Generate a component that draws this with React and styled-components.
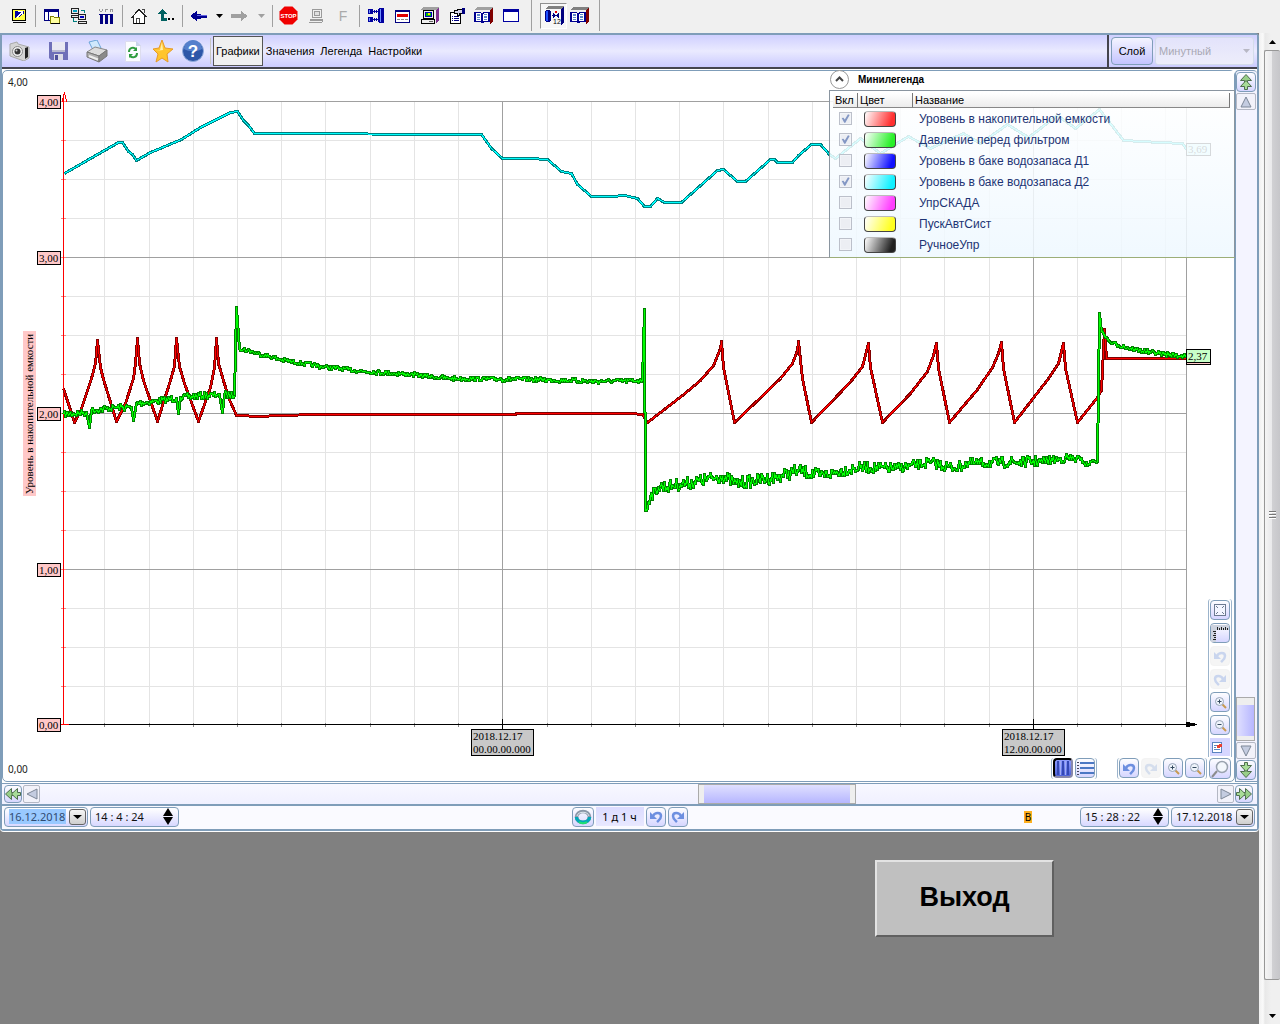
import styled, { createGlobalStyle } from "styled-components";

const GlobalStyle = createGlobalStyle`
    * { box-sizing: border-box; }
    body {
        margin: 0;
        background: #f0f0f0;
        font-family: "Liberation Sans", Arial, sans-serif;
        font-size: 12px;
        color: #000;
    }
    button, input, select {
        font: inherit;
        color: inherit;
        margin: 0;
        padding: 0;
    }
    svg { display: block; flex: none; }
`

/* ---------- window frame ---------- */

const Page = styled.div`
    display: flex;
    flex-direction: column;
    min-height: 100vh;
`
const Body = styled.div`
    display: flex;
    flex: 1;
`
const Workspace = styled.main`
    display: flex;
    flex-direction: column;
    flex: 1;
    min-width: 0;
    background: #808080;
`
const Panel = styled.section`
    background: #fff;
    border: 2px solid #7f9db9;
    border-radius: 0 4px 4px 4px;
    box-shadow: 0 1px 0 #fff;
`
const ExitButton = styled.button`
    align-self: flex-end;
    width: 179px;
    height: 77px;
    margin: 29px 205px 29px 0;
    padding-bottom: 2px;
    background: #c0c0c0;
    border: 2px solid;
    border-color: #e3e3e3 #606060 #606060 #e3e3e3;
    font-size: 27px;
    font-weight: 700;
`
const PageScroll = styled.div`
    display: flex;
    flex-direction: column;
    align-items: center;
    width: 21px;
    padding-left: 5px;
    background: linear-gradient(90deg, #f0f0f0 0, #fafafa 4px, #e8e8e8 6px, #f0f0f0 12px);
`
const PageScrollArrow = styled.button`
    display: flex;
    align-items: center;
    justify-content: center;
    width: 16px;
    height: 17px;
    border: 0;
    background: none;
`
const PageThumb = styled.div`
    display: flex;
    flex: 1;
    flex-direction: column;
    align-items: center;
    justify-content: center;
    gap: 1px;
    width: 16px;
    margin-bottom: 27px;
    border: 1px solid #979797;
    border-right: 0;
    border-radius: 2px;
    background: linear-gradient(90deg, #f5f5f5, #e9e9eb 45%, #d0d0d3 50%, #c6c6ca);
`
const Grip = styled.span`
    width: 7px;
    height: 2px;
    border-bottom: 1px solid #fff;
    background: #777;
`

/* ---------- top toolbar ---------- */

const TopBar = styled.header`
    display: flex;
    align-items: center;
    height: 33px;
    padding: 0 0 2px 5px;
`
const TopButton = styled.button`
    display: flex;
    align-items: center;
    justify-content: center;
    width: ${(p) => p.$width || 27}px;
    height: 26px;
    border: 1px solid;
    border-color: ${(p) => (p.$pressed ? "#909090 #fff #fff #909090" : "transparent")};
    background: ${(p) => (p.$pressed ? "#f7f7f7" : "none")};
`
const TopSeparator = styled.span`
    width: 1px;
    height: ${(p) => (p.$tall ? 31 : 22)}px;
    margin: ${(p) => (p.$tall ? "0 8px 0 7px" : "0 2px 0 3px")};
    background: #a0a0a0;
`

/* ---------- ribbon with the view tabs ---------- */

const Ribbon = styled.nav`
    display: flex;
    align-items: center;
    height: 34px;
    border-bottom: 2px solid #44444e;
    background: linear-gradient(#cfcfff, #eaeaff 50%, #cbcbff);
`
const RibbonIcon = styled.button`
    display: flex;
    align-items: center;
    justify-content: center;
    width: ${(p) => p.$width}px;
    height: 30px;
    border: 0;
    background: none;
`
const RibbonTab = styled.button`
    height: 30px;
    padding: 0 2px;
    border: 1px solid ${(p) => (p.$active ? "#555" : "transparent")};
    background: ${(p) => (p.$active ? "#f0f0f0" : "none")};
    font-size: 11px;
`
const RibbonLine = styled.span`
    width: 1px;
    height: 26px;
    margin-right: 2px;
    background: #c8c8c0;
`
const LayerBox = styled.div`
    display: flex;
    align-items: center;
    gap: 2px;
    margin-left: auto;
    height: 32px;
    padding: 0 3px 0 2px;
    border-left: 2px solid #44444e;
`
const LayerButton = styled.button`
    width: 42px;
    height: 28px;
    border: 1px solid #7f9db9;
    border-radius: 4px;
    background: linear-gradient(#f4f4ff, #c4c4ff);
    font-size: 11px;
`
const LayerSelect = styled.select`
    appearance: none;
    width: 99px;
    height: 28px;
    padding-left: 3px;
    border: 1px solid #d4dcea;
    border-radius: 3px;
    background: linear-gradient(#e3e3fb, #ededfa);
    color: #a9a9b4;
    font-size: 11px;
    opacity: 1;
`
const SelectWrap = styled.label`
    display: grid;
    align-items: center;
    > * { grid-area: 1 / 1; }
    > svg { justify-self: end; margin-right: 4px; }
`

/* ---------- chart ---------- */

const ChartRow = styled.div`
    display: flex;
    margin-top: 1px;
`
const ChartArea = styled.div`
    position: relative;
    flex: 1;
    min-width: 0;
    border: 1px solid #7f9db9;
    border-radius: 5px;
    background: #fff;
`
const ChartSvg = styled.svg`
    width: 100%;
    height: auto;
`
const SideTools = styled.div`
    position: absolute;
    right: 2px;
    bottom: 1px;
    display: flex;
    flex-direction: column;
    align-items: flex-end;
`
const ToolColumn = styled.div`
    display: flex;
    flex-direction: column;
    gap: 3px;
    padding: 1px;
    border: 1px solid #9bb3cb;
    border-width: 0 1px;
    border-radius: 3px 3px 0 0;
`
const ToolRow = styled.div`
    display: flex;
    gap: 2px;
    padding: 1px;
`
const ToolGroup = styled.div`
    display: flex;
    gap: 2px;
    padding: 0 1px;
    margin-right: ${(p) => p.$after || 0}px;
    border: 1px solid #9bb3cb;
    border-width: 0 1px;
    border-radius: 3px;
`
const ToolButton = styled.button`
    display: flex;
    align-items: center;
    justify-content: center;
    width: ${(p) => p.$width || 20}px;
    height: ${(p) => p.$height || 20}px;
    border: 1px solid ${(p) => (p.disabled ? "#f3f3f3" : "#7f9db9")};
    border-radius: 4px;
    background: ${(p) => (p.disabled ? "#f5f5f5" : "linear-gradient(#fdfdff, #d6d6ff)")};
    ${(p) => p.$pressed && "border: 2px solid #000; border-right-color: #88a; border-bottom-color: #88a; background: linear-gradient(#8f9dff, #4d62d8);"}
    ${(p) => p.$flat && "border: 0; border-radius: 0; background: #d6d6ff;"}
    ${(p) => p.$plain && "border-color: #b4b8c4; border-radius: 2px; background: #f2f2fa;"}
`

/* ---------- minilegend ---------- */

const Legend = styled.aside`
    position: absolute;
    top: 0;
    right: -1px;
    width: 406px;
`
const LegendHeader = styled.div`
    display: flex;
    align-items: center;
    gap: 9px;
    height: 19px;
    padding: 0 0 2px 1px;
    margin-right: 1px;
    background: #fff;
    font-size: 10px;
    font-weight: 700;
`
const CollapseButton = styled.button`
    display: flex;
    align-items: center;
    justify-content: center;
    width: 19px;
    height: 19px;
    border: 1px solid #999;
    border-radius: 50%;
    background: #fff;
`
const LegendBody = styled.div`
    height: 168px;
    padding: 2px 4px 0 3px;
    border: 1px solid #8a95a0;
    border-bottom-color: #9cae78;
    background: linear-gradient(rgba(255, 255, 255, 0.86), rgba(238, 248, 255, 0.86));
`
const LegendTable = styled.table`
    width: 100%;
    border-collapse: separate;
    border-spacing: 0;
    table-layout: fixed;
    th {
        height: 15px;
        padding: 0 0 0 2px;
        border-right: 1px solid #777;
        border-bottom: 1px solid #888;
        background: linear-gradient(#fff, #ececec);
        text-align: left;
        font-size: 11px;
        font-weight: 400;
        line-height: 14px;
    }
    td {
        height: 21px;
        padding: 0 0 0 6px;
        color: #1d3474;
        line-height: 14px;
    }
`
const Check = styled.input`
    appearance: none;
    display: grid;
    place-content: center;
    width: 13px;
    height: 13px;
    border: 1px solid #bcc0ca;
    outline: 1px solid #f2f4f8;
    outline-offset: -2px;
    background: #eceef3;
    &:checked::before {
        content: "";
        width: 9px;
        height: 9px;
        background: #8397c4;
        clip-path: polygon(8% 45%, 28% 42%, 42% 62%, 78% 4%, 96% 10%, 48% 98%, 36% 98%);
    }
`
const Swatch = styled.span`
    display: block;
    width: 32px;
    height: 16px;
    border: 1px solid #444;
    border-top-color: #bbb;
    border-radius: 4px;
    background: linear-gradient(110deg, #fff, ${(p) => p.$color} 85%);
`

/* ---------- chart scroll bars ---------- */

const VScroll = styled.div`
    display: flex;
    flex-direction: column;
    align-items: center;
    gap: 1px;
    width: 22px;
    padding: 1px 2px 1px 0;
    border: 1px solid #7f9db9;
    border-width: 1px 0 1px 1px;
    border-radius: 4px 4px 0 0;
    background: #f4f4ff;
`
const HScroll = styled.div`
    display: flex;
    align-items: center;
    gap: 1px;
    height: 23px;
    margin-top: 1px;
    padding: 0 4px 0 2px;
    border-top: 1px solid #7f9db9;
    border-bottom: 2px solid #7f9db9;
    background: linear-gradient(#f8f8ff, #f0f0ff);
`
const Track = styled.div`
    display: flex;
    flex: 1;
    align-self: stretch;
    flex-direction: ${(p) => (p.$vertical ? "column" : "row")};
`
const Space = styled.span`
    flex: ${(p) => p.$part};
`
const Thumb = styled.div`
    flex: ${(p) => p.$part};
    border: 0 solid #eee;
    border-width: ${(p) => (p.$vertical ? "8px 0 5px" : "0 6px")};
    outline: 1px solid #aaa;
    outline-offset: -1px;
    background: linear-gradient(${(p) => (p.$vertical ? "90deg" : "180deg")}, #e2e2ff, #b4b4ff);
    background-clip: padding-box;
    background-color: #eee;
`

/* ---------- time range footer ---------- */

const Footer = styled.footer`
    display: grid;
    grid-template-columns: 1fr auto 1fr;
    align-items: center;
    height: 23px;
    padding: 0 2px 2px;
    background: #fafaff;
    font-family: "Noto Sans", sans-serif;
    font-size: 12px;
`
const FooterGroup = styled.div`
    display: flex;
    align-items: center;
    justify-content: ${(p) => (p.$end ? "flex-end" : "flex-start")};
    gap: 2px;
`
const FieldBox = styled.div`
    display: flex;
    align-items: center;
    justify-content: space-between;
    width: ${(p) => p.$width}px;
    height: 20px;
    padding: 0 1px 0 4px;
    border: 1px solid #7f9db9;
    border-radius: 4px;
    background: linear-gradient(#fff, #d8d8ff);
`
const Field = styled.input`
    width: ${(p) => p.$width}px;
    height: 15px;
    border: 0;
    outline: 0;
    background: ${(p) => (p.$selected ? "#99c9ff" : "none")};
    color: ${(p) => (p.$selected ? "#2f4a70" : "#111")};
    font-size: 11px;
`
const DropButton = styled.button`
    display: flex;
    align-items: center;
    justify-content: center;
    width: 17px;
    height: 16px;
    border: 1px solid #666;
    border-radius: 3px;
    background: linear-gradient(#f6f6f6, #cfcfcf);
`
const SpinButtons = styled.span`
    display: flex;
    flex-direction: column;
    gap: 1px;
    margin-right: 4px;
`
const SpinButton = styled.button`
    display: block;
    border: 0;
    background: none;
`
const SpanLabel = styled.output`
    width: 48px;
    height: 19px;
    background: linear-gradient(#dcdcff, #e8e8ff);
    font-size: 11px;
    line-height: 20px;
    text-align: center;
`
const Marker = styled.span`
    width: 8px;
    margin-right: 46px;
    background: #ffb020;
    font-size: 10px;
    line-height: 12px;
    text-align: center;
`

/* ---------- icons ---------- */

const Icon = ({ w = 16, h = 16, children }) => (
    <svg width={w} height={h} viewBox={`0 0 ${w} ${h}`} fill="none" shapeRendering="crispEdges" aria-hidden="true">
        {children}
    </svg>
);
const Smooth = ({ w = 16, h = 16, children }) => (
    <svg width={w} height={h} viewBox={`0 0 ${w} ${h}`} fill="none" aria-hidden="true">
        {children}
    </svg>
);

const RuntimeIcon = () => (
    <Icon>
        <path d="M1 1h14v12H1zM2 14h13v1H2z" fill="#000" />
        <path d="M2 2h12v10H2z" fill="#ffff40" />
        <path d="M4 3h9v8H4z" fill="#0000a0" />
        <path d="M3 11l3-3 2 1 2-2 1 1 2-3v6z" fill="#ffff40" />
        <path d="M5 9l5-5h-3V3h5v4h-1V5L6 10z" fill="#fff" />
    </Icon>
);
const WindowFolderIcon = () => (
    <Icon>
        <path d="M.5 1.500h14v11H.5z" fill="#fff" stroke="#000080" />
        <path d="M1 2h13v2H1z" fill="#000080" />
        <path d="M4 4h1v9H4z" fill="#000080" />
        <path d="M6.500 8.500h3l1 1h5v6h-9z" fill="#ffffa0" stroke="#808000" />
        <path d="M7 15h9v1H7z" fill="#000" />
    </Icon>
);
const Pc = ({ x, y, screen = "#0000c0" }) => (
    <g transform={`translate(${x} ${y})`}>
        <path d="M0 0h8v6H0zM0 7h9v3H0z" fill="#222" />
        <path d="M1 1h6v4H1zM1 8h7v1H1z" fill="#e8e8e8" />
        <path d="M2 2h4v2H2z" fill={screen} />
    </g>
);
const NetworkIcon = () => (
    <Icon>
        <path d="M10 2.500h3.500V5M2.500 10v3.500H6" stroke="#008080" />
        <Pc x={0} y={0} screen="#00a0c0" />
        <Pc x={7} y={6} />
    </Icon>
);
const TanksIcon = () => (
    <Icon>
        <path d="M2 6h3v10H2zM7 6h3v10H7zM12 6h3v10h-3z" fill="#000080" />
        <path d="M1 6h14v1H1z" fill="#000080" />
        <path d="M1 1h1v2H1zM4 1h1v2H4zM2 3h2v1H2zM7 1h3v1H7zM7 2h1v2H7zM12 1h3v1h-3zM14 2h1v2h-1zM12 2h1v2h-1z" fill="#999" />
    </Icon>
);
const HomeIcon = () => (
    <Icon>
        <path d="M2.500 15.500v-7l-2 1L8 1.500l7 7h-2v7z" fill="#fff" stroke="#222" />
        <path d="M5.500 15v-5h3v5M11 1h2v4" stroke="#444" />
        <path d="M3 15h11" stroke="#000" />
    </Icon>
);
const UpLevelIcon = () => (
    <Icon>
        <path d="M4 1L0 6h3v7h6v-3H6V6h3z" fill="#006060" />
        <path d="M10 10h2v2h-2zM14 10h2v2h-2z" fill="#000" />
    </Icon>
);
const ArrowIcon = ({ right, color }) => (
    <Icon w={17} h={10}>
        <path
            d={right ? "M17 5l-7-5v3H0v4h10v3z" : "M0 5l7-5v3h4v1h6v3h-6v1H7v2z"}
            fill={color}
        />
        {!right && <path d="M7 4h10v1H7z" fill="#6060e0" />}
    </Icon>
);
const Caret = ({ color = "#000", up, w = 7 }) => (
    <Smooth w={w} h={4}>
        <path d={up ? `M0 4h${w}L${w / 2} 0z` : `M0 0h${w}L${w / 2} 4z`} fill={color} />
    </Smooth>
);
const StopIcon = () => (
    <Smooth w={19} h={19}>
        <path d="M5.500.5h8l5 5v8l-5 5h-8l-5-5v-8z" fill="#f00000" />
        <text x="9.500" y="12" fill="#fff" fontSize="6" fontWeight="700" textAnchor="middle">STOP</text>
    </Smooth>
);
const GrayPcIcon = () => (
    <Icon>
        <path d="M4 1h10v9H4zM2 11h12v2H2zM1 14h13v1H1z" fill="#9a9a9a" />
        <path d="M5 2h8v7H5z" fill="#f0f0f0" />
        <path d="M6 3h6v5H6z" fill="#9a9a9a" />
        <path d="M7 4h4v3H7z" fill="#e0e0e0" />
        <path d="M14 11h1v3h-1z" fill="#9a9a9a" />
    </Icon>
);
const ForceIcon = () => (
    <Smooth>
        <text x="8" y="13" fill="#aaa" fontSize="14" textAnchor="middle">F</text>
    </Smooth>
);
const LinkIcon = () => (
    <Icon>
        <path d="M0 1h5v5H0zM0 9h5v5H0zM11 0h4l1 1v13l-1 1h-4l-1-1V1z" fill="#0000a0" />
        <path d="M1 2h1v3H1zM1 10h1v3H1zM12 1h1v13h-1z" fill="#7090ff" />
        <path d="M5 3h1v1H5zM6 2h1v3H6zM7 3h1v1H7zM8 2h1v3H8zM9 3h1v1H9zM5 11h1v1H5zM6 10h1v3H6zM7 11h1v1H7zM8 10h1v3H8zM9 11h1v1H9z" fill="#0000a0" />
    </Icon>
);
const FormIcon = () => (
    <Icon w={15} h={14}>
        <path d="M.5 1.500h14v12H.5z" fill="#fff" stroke="#000080" />
        <path d="M0 1h15v2H0z" fill="#000080" />
        <path d="M2 5h11v3H2z" fill="#e00000" />
        <path d="M2 10h3v1H2zM6 10h3v1H6zM10 10h3v1h-3z" fill="#888" />
    </Icon>
);
const MonitorIcon = () => (
    <Icon w={19} h={17}>
        <path d="M4 0h15l-3 3H0z" fill="#a0a0a0" />
        <path d="M19 0v13l-3 4V3z" fill="#803090" />
        <path d="M3 3h11v9H3zM1 12h14v5H1z" fill="#000" />
        <path d="M4 4h9v7H4zM2 13h12v3H2z" fill="#eee" />
        <path d="M5 5h7v5H5z" fill="#0000c0" />
        <path d="M6 6h5v3H6z" fill="#00c000" />
        <path d="M8 6h2v2H8z" fill="#ffe000" />
        <path d="M9 14h4v1H9z" fill="#666" />
    </Icon>
);
const PropsIcon = () => (
    <Icon>
        <path d="M1 4h11v12H1z" fill="#000" />
        <path d="M2 5h9v10H2z" fill="#fff" />
        <path d="M3 8h1v1H3zM5 8h5v1H5zM3 10h1v1H3zM5 10h5v1H5zM3 12h1v1H3zM5 12h5v1H5z" fill="#000080" />
        <path d="M5 2h3V1h5v5h-2v2H9v1H8V6H5z" fill="#000" />
        <path d="M6 3h3V2h4v3h-3v2H9V5H6z" fill="#d4d4e8" />
        <path d="M13 0h3v6h-3z" fill="#000080" />
    </Icon>
);
const BookIcon = ({ shade = "#a0a0a0" }) => (
    <Icon w={19} h={17}>
        <path d="M4 0h15l-3 3H0z" fill={shade} />
        <path d="M19 0v14l-3 3V3z" fill="#800000" />
        <path d="M0 5h6l2 1 2-1h6v10h-6l-1 1H7l-1-1H0z" fill="#000090" />
        <path d="M2 6h4l1 1v7H2zM9 7l1-1h4v8H9z" fill="#fff" />
        <path d="M3 7h3v2H3zM3 10h3v1H3zM3 12h3v1H3zM10 7h3v1h-3zM10 9h3v2h-3zM10 12h3v1h-3z" fill="#5a86c8" />
    </Icon>
);
const BlankWindowIcon = () => (
    <Icon w={16} h={13}>
        <path d="M0 0h16v13H0z" fill="#0000a0" />
        <path d="M1 3h14v9H1z" fill="#fff" />
    </Icon>
);
const ScaleIcon = () => (
    <Icon w={20} h={19}>
        <path d="M4 0h16l-3 3H1z" fill="#808080" />
        <path d="M20 0v16l-3 3V3z" fill="#000080" />
        <path d="M1 5l2-1h2l2 1v10l-2 1H3l-2-1z" fill="#000080" />
        <path d="M2 5h2v10H2z" fill="#2050ff" />
        <path d="M8 9h1V7h1v1h1v1h2V8h1V7h1v5h-1v-1h-1v-1h-2v1h-1v1H9v-2H8z" fill="#000080" />
        <path d="M11 5h2v2h-2z" fill="#e00000" />
        <text x="9" y="18" fill="#000" fontSize="7">12</text>
    </Icon>
);

const CameraIcon = () => (
    <Smooth w={22} h={20}>
        <path d="M1 3l7-2 1 2 11 3v11l-5 3L1 15z" fill="#d4d4d4" stroke="#aaa" />
        <path d="M16 7l3-1v10l-3 2z" fill="#222" />
        <circle cx="8.500" cy="10.500" r="5" fill="#f2f2f2" stroke="#888" />
        <circle cx="8.500" cy="10.500" r="3" fill="#333" />
        <circle cx="7.500" cy="9.500" r="1" fill="#ccc" />
    </Smooth>
);
const FloppyIcon = () => (
    <Smooth w={19} h={20}>
        <path d="M0 1h19v18H2l-2-2z" fill="#6f70b8" />
        <path d="M3 1h13v10H3z" fill="#e9e9f2" />
        <path d="M3 9h13v2H3z" fill="#b9bad0" />
        <path d="M5 13h9v6H5z" fill="#dcdce6" />
        <path d="M6 14h3v5H6z" fill="#50519c" />
    </Smooth>
);
const PrinterIcon = () => (
    <Smooth w={22} h={23}>
        <path d="M3 2l8-2 4 8-7 4z" fill="#cfe8fc" stroke="#6aa5d8" />
        <path d="M1 12l8-5 12 3-8 6z" fill="#dcdcdc" stroke="#888" />
        <path d="M1 12l12 4v6L1 17z" fill="#b0b0b0" stroke="#777" />
        <path d="M13 16l8-6v6l-8 6z" fill="#8a8a8a" stroke="#777" />
        <path d="M3 16l9 3.500" stroke="#eee" strokeWidth="2" />
    </Smooth>
);
const RefreshIcon = () => (
    <Smooth w={16} h={21}>
        <path d="M.5.5h11l4 4v16H.5z" fill="#fbfcff" stroke="#dde" />
        <path d="M11 0v5h5z" fill="#c8d4ea" />
        <path d="M4 11c0-5 5-5 7-3M12 12c0 5-5 5-7 3" stroke="#2f9c3f" strokeWidth="2" />
        <path d="M12 6v4H8zM4 17v-4h4z" fill="#2f9c3f" />
    </Smooth>
);
const StarIcon = () => (
    <Smooth w={21} h={23}>
        <path d="M9 0l3 8 8 1-6 5 1 8-6-4-6 4 2-8-5-5 6-1z" fill="#ffc52e" stroke="#e79a28" />
        <path d="M9 2l1 8-7 1 4-1z" fill="#fff0a8" />
    </Smooth>
);
const HelpIcon = () => (
    <Smooth w={22} h={22}>
        <circle cx="11" cy="11" r="10.500" fill="#2d57a8" stroke="#8faadb" />
        <path d="M2 9a9 9 0 0 1 18 0c-5 3-13 3-18 0z" fill="#5580cc" />
        <text x="11" y="17" fill="#fff" fontSize="17" fontWeight="700" textAnchor="middle">?</text>
    </Smooth>
);

const FitIcon = () => (
    <Icon w={12} h={12}>
        <path d="M0 0h12v12H0z" fill="#6c7a90" />
        <path d="M1 1h10v10H1z" fill="#f4f6ff" />
        <path d="M2 2h1v1H2zM3 3h1v1H3zM9 2h1v1H9zM8 3h1v1H8zM2 9h1v1H2zM3 8h1v1H3zM9 9h1v1H9zM8 8h1v1H8z" fill="#6c7a90" />
    </Icon>
);
const RulerIcon = () => (
    <Icon w={18} h={17}>
        <path d="M0 0h18v5H5v12H0z" fill="#cdd2de" />
        <path d="M6 2h1v3H6zM8 3h1v2H8zM10 2h1v3h-1zM12 3h1v2h-1zM14 2h1v3h-1zM16 3h1v2h-1zM2 6h3v1H2zM3 8h2v1H3zM2 10h3v1H2zM3 12h2v1H3zM2 14h3v1H2z" fill="#222" />
    </Icon>
);
const TurnIcon = ({ redo, color = "#6d8fe0" }) => (
    <Smooth w={14} h={13}>
        <g transform={redo ? "translate(14 0) scale(-1 1)" : undefined}>
            <path d="M4 6C6 2 12 2 12 6c0 3-2 4-4 6" stroke={color} strokeWidth="2.500" />
            <path d="M1 2v7h7z" fill={color} />
        </g>
    </Smooth>
);
const ZoomIcon = ({ plus }) => (
    <Smooth w={13} h={13}>
        <path d="M8 8l4 4" stroke="#c89a50" strokeWidth="2" />
        <circle cx="5.500" cy="5.500" r="4" fill="#eef3fb" stroke="#98a5b8" />
        <path d={plus ? "M3.500 5.500h4M5.500 3.500v4" : "M3.500 5.500h4"} stroke="#34495e" />
    </Smooth>
);
const LoupeIcon = () => (
    <Smooth w={18} h={18}>
        <path d="M6 11l-5 6" stroke="#8c8c8c" strokeWidth="2" />
        <circle cx="11" cy="7" r="5.500" fill="#f3f7fc" stroke="#9aa3af" strokeWidth="1.500" />
    </Smooth>
);
const NoteIcon = () => (
    <Icon w={16} h={12}>
        <path d="M0 1h10v11H0z" fill="#5b83c0" />
        <path d="M1 2h8v9H1z" fill="#fff" />
        <path d="M2 4h3v1H2zM2 6h2v1H2zM2 8h6v1H2z" fill="#5b83c0" />
        <path d="M5 4h2V3h3v3H8v1H5z" fill="#e84030" />
    </Icon>
);
const ColumnsIcon = () => (
    <Icon w={16} h={16}>
        <path d="M3 1v14M8 1v14M13 1v14" stroke="#3448b4" strokeWidth="2" />
        <path d="M5.500 1v14M10.500 1v14" stroke="#a0acf4" />
    </Icon>
);
const RowsIcon = () => (
    <Icon w={18} h={16}>
        <path d="M4 3h14M4 8h14M4 13h14" stroke="#4c78c4" strokeWidth="2" />
        <path d="M1 2h2v1H1zM1 5h2v1H1zM1 8h2v1H1zM1 11h2v1H1zM1 14h2v1H1z" fill="#445" />
    </Icon>
);
const RingIcon = () => (
    <Smooth w={18} h={16}>
        <ellipse cx="9" cy="8" rx="6.500" ry="5.500" stroke="#8a97a8" strokeWidth="3.500" />
        <path d="M2.500 8c0 7 13 7 13 0" stroke="#00a8b8" strokeWidth="3.500" />
        <path d="M5 13c3 2 5 2 8 0" stroke="#20e070" strokeWidth="2" />
        <path d="M3 7c1-5 11-5 12 0" stroke="#dfe7ee" />
    </Smooth>
);
const DoubleArrow = ({ turn = 0 }) => (
    <Smooth w={16} h={16}>
        <g transform={`rotate(${turn} 8 8)`}>
            <path d="M9.500 2.500l6 5.500-6 5.500v-4h-3v-3h3z" fill="#98cf88" stroke="#4e6e4e" />
            <path d="M3.500 2.500l6 5.500-6 5.500v-4h-3v-3h3z" fill="#a8dc98" stroke="#4e6e4e" />
        </g>
    </Smooth>
);
const Triangle = ({ turn = 0 }) => (
    <Smooth w={12} h={12}>
        <path d="M1 1l10 5-10 5z" fill="#c4cce0" stroke="#7d8797" transform={`rotate(${turn} 6 6)`} />
    </Smooth>
);
const Spin = ({ down }) => (
    <Smooth w={10} h={8}>
        <path d={down ? "M0 0h10L5 8z" : "M0 8h10L5 0z"} fill="#000" />
    </Smooth>
);

/* ---------- chart data, [x, y] pairs in plot units ---------- */

const LEVEL_TANK_2 = [
    [64, 173], [90, 158], [118, 142], [122, 142], [128, 151], [132, 154], [136, 160], [150, 152], [181, 139], [200, 127], [220, 117],
    [230, 112], [237, 111], [243, 120], [248, 125], [254, 133], [481, 134], [491, 148], [502, 158], [530, 158], [547, 159], [561, 171],
    [571, 173], [577, 184], [591, 196], [612, 196], [624, 195], [637, 198], [644, 206], [650, 206], [657, 198], [664, 202], [681, 202],
    [717, 170], [723, 169], [737, 181], [745, 181], [770, 159], [774, 159], [777, 162], [792, 162], [798, 155], [811, 144], [820, 144],
    [829, 154], [835, 158], [860, 138], [880, 153], [908, 136], [930, 148], [963, 133], [980, 143], [1007, 124], [1028, 137], [1057, 115],
    [1075, 128], [1099, 109], [1123, 140], [1160, 142], [1182, 143], [1187, 150],
];
const LEVEL_STORAGE = [
    [63, 388], [74, 422], [80, 411], [91, 378], [95, 363], [97, 340], [100, 367], [103, 379], [116, 421], [125, 403], [133, 378],
    [135, 363], [137, 338], [139, 363], [143, 380], [157, 421], [170, 380], [174, 366], [176, 338], [179, 366], [184, 383], [198, 421],
    [210, 387], [214, 367], [216, 338], [218, 363], [228, 397], [236, 415], [260, 416], [277, 415], [320, 414], [515, 414], [516, 413],
    [630, 413], [642, 414], [647, 422], [660, 412], [682, 395], [700, 380], [713, 365], [720, 348], [721, 341], [723, 367], [734, 422],
    [753, 404], [780, 378], [792, 363], [797, 350], [798, 341], [802, 378], [811, 422], [840, 392], [852, 379], [862, 366], [868, 343],
    [870, 367], [882, 422], [910, 393], [927, 371], [933, 355], [936, 343], [938, 368], [949, 422], [977, 389], [992, 367], [998, 353],
    [1001, 342], [1003, 368], [1014, 422], [1048, 378], [1058, 363], [1063, 343], [1065, 368], [1077, 422], [1097, 397], [1101, 390],
    [1104, 329], [1106, 358], [1187, 358],
];
// third value is the amplitude of the ripple up to that point
const PRESSURE = [
    [63, 414, 0], [86, 412, 3], [89, 427, 0], [91, 410, 0], [115, 407, 3], [131, 407, 3], [133, 420, 0], [136, 403, 0], [176, 398, 3],
    [178, 413, 0], [180, 397, 0], [219, 394, 3], [222, 412, 0], [224, 394, 0], [234, 395, 3], [236, 307, 0], [239, 348, 0],
    [280, 359, 2], [320, 366, 2], [365, 371, 2], [410, 374, 2], [450, 378, 2], [530, 379, 2], [600, 381, 2],
    [642, 380, 2], [644, 309, 0], [645, 510, 0], [650, 496, 5], [658, 487, 5], [680, 484, 6], [722, 476, 6], [736, 483, 6],
    [775, 477, 6], [798, 470, 6], [820, 475, 6], [860, 467, 5], [895, 468, 5], [930, 462, 5], [954, 468, 5], [966, 463, 5],
    [1000, 462, 5], [1040, 461, 5], [1065, 458, 4], [1080, 459, 4], [1087, 465, 2], [1092, 460, 1], [1097, 461, 1], [1099, 313, 0],
    [1101, 331, 0], [1110, 342, 1], [1130, 348, 2], [1150, 352, 2], [1187, 356, 2],
];

const COLUMNS = Array.from({ length: 25 }, (_, i) => Math.floor(104.9 + 44.21 * i));
const ROWS = Array.from({ length: 17 }, (_, i) => Math.min(101 + 39 * i, 724));
const MAJOR_COLUMNS = [9, 21];
const Y_LABELS = ["4,00", "3,00", "2,00", "1,00", "0,00"];
const X_LABELS = ["00.00.00.000", "12.00.00.000"];

function toLine(points) {
    return points.map((p) => p.join(",")).join(" ");
}

function addRipple(points) {
    let seed = 7;
    const random = () => {
        seed = (seed * 16807) % 2147483647;
        return seed / 2147483647 - 0.5;
    };
    const out = [points[0].slice(0, 2)];
    for (let i = 1; i < points.length; i++) {
        const [x0, y0] = points[i - 1];
        const [x1, y1, amp] = points[i];
        if (amp) {
            for (let x = x0 + 1; x < x1; x += 1) {
                const y = y0 + ((y1 - y0) * (x - x0)) / (x1 - x0);
                out.push([x, Math.round(y + random() * 2 * amp)]);
            }
        }
        out.push([x1, y1]);
    }
    return out;
}

const PRESSURE_LINE = toLine(addRipple(PRESSURE));

function Trace({ points, color, edge }) {
    return (
        <g fill="none" strokeLinejoin="round" transform="translate(0.5 0.5)" shapeRendering="crispEdges">
            <polyline points={points} stroke={edge} strokeWidth="3" />
            <polyline points={points} stroke={color} strokeWidth="1" />
        </g>
    );
}

function Chart() {
    return (
        <ChartSvg viewBox="3 71 1231 710" role="img" aria-label="Графики" fontFamily="Liberation Serif, serif" fontSize="11">
            <g shapeRendering="crispEdges">
                {COLUMNS.map((x, i) => !MAJOR_COLUMNS.includes(i) && <rect key={x} x={x} y="101" width="1" height="623" fill="#e4e4e4" />)}
                {ROWS.map((y, i) => i % 4 !== 0 && <rect key={y} x="64" y={y} width="1123" height="1" fill="#e4e4e4" />)}
                {MAJOR_COLUMNS.map((i) => <rect key={i} x={COLUMNS[i]} y="101" width="1" height="623" fill="#a0a0a0" />)}
                {ROWS.map((y, i) => i % 4 === 0 && <rect key={y} x="64" y={y} width="1123" height="1" fill="#a0a0a0" />)}
                <rect x="1186" y="101" width="1" height="623" fill="#a0a0a0" />
                {COLUMNS.map((x, i) => (
                    <rect key={x} x={x} y={MAJOR_COLUMNS.includes(i) ? 719 : 723} width="1" height={MAJOR_COLUMNS.includes(i) ? 10 : 4} fill={MAJOR_COLUMNS.includes(i) ? "#000" : "#888"} />
                ))}
                <rect x="64" y="724" width="1124" height="1" fill="#000" />
                <path d="M1186 722h4v1h5v1h2v1h-2v1h-5v1h-4z" fill="#000" />
                {ROWS.map((y) => <rect key={y} x="61" y={y} width="5" height="1" fill="#ff8080" />)}
                <rect x="63" y="97" width="1" height="628" fill="#f00" />
                <rect x="61" y="724" width="8" height="1" fill="#f00" />
                <path d="M62 98h1v-4h1v-2h1v3h1v4h1v3h-1v-3h-1v-4h-1v4h-1v3h-1z" fill="#f00" />
            </g>

            <Trace points={toLine(LEVEL_TANK_2)} color="#00ffff" edge="#008080" />
            <Trace points={toLine(LEVEL_STORAGE)} color="#ff0000" edge="#800000" />
            <Trace points={PRESSURE_LINE} color="#00ff00" edge="#008000" />

            {Y_LABELS.map((label, i) => (
                <g key={label}>
                    <rect x="37.500" y={ROWS[i * 4] - 5.5} width="23" height="13" fill="#ffc8c8" stroke="#000" />
                    <text x="39" y={ROWS[i * 4] + 5}>{label}</text>
                </g>
            ))}
            {X_LABELS.map((label, i) => (
                <g key={label} transform={`translate(${COLUMNS[MAJOR_COLUMNS[i]]} 729)`}>
                    <rect x="-30.500" y="0.500" width="62" height="26" fill="#c8c8c8" stroke="#000" />
                    <text x="-29" y="11">2018.12.17</text>
                    <text x="-29" y="24">{label}</text>
                </g>
            ))}

            <rect x="23" y="331" width="13" height="165" fill="#ffc8c8" />
            <text x="-414" y="33" textAnchor="middle" transform="rotate(-90)">Уровень в накопительной емкости</text>

            <rect x="1186.500" y="351.500" width="24" height="13" fill="#ffc8c8" stroke="#000" />
            <rect x="1186.500" y="349.500" width="24" height="13" fill="#c8ffc8" stroke="#000" />
            <text x="1188" y="360">2,37</text>
            <rect x="1186.500" y="143.500" width="24" height="12" fill="#c8ffff" stroke="#000" />
            <text x="1188" y="153">3,69</text>

            <g fontFamily="Noto Sans, sans-serif" fontSize="10" fill="#222">
                <text x="8" y="86">4,00</text>
                <text x="8" y="773">0,00</text>
            </g>
        </ChartSvg>
    );
}

const SIGNALS = [
    { name: "Уровень в накопительной емкости", color: "#ff3030", on: true },
    { name: "Давление перед фильтром", color: "#28f028", on: true },
    { name: "Уровень в баке водозапаса Д1", color: "#1010ff", on: false },
    { name: "Уровень в баке водозапаса Д2", color: "#10f0ff", on: true },
    { name: "УпрСКАДА", color: "#ff40ff", on: false },
    { name: "ПускАвтСист", color: "#ffff20", on: false },
    { name: "РучноеУпр", color: "#202020", on: false },
];

function MiniLegend() {
    return (
        <Legend>
            <LegendHeader>
                <CollapseButton aria-label="Свернуть">
                    <Smooth w={9} h={7}>
                        <path d="M1 5l3.500-3.500L8 5" stroke="#444" strokeWidth="2" />
                    </Smooth>
                </CollapseButton>
                Минилегенда
            </LegendHeader>
            <LegendBody>
                <LegendTable>
                    <colgroup>
                        <col width="25" />
                        <col width="55" />
                        <col />
                    </colgroup>
                    <thead>
                        <tr><th>Вкл</th><th>Цвет</th><th>Название</th></tr>
                    </thead>
                    <tbody>
                        {SIGNALS.map((s, i) => (
                            <tr key={s.name}>
                                <td><Check type="checkbox" id={`signal-${i}`} defaultChecked={s.on} /></td>
                                <td><Swatch $color={s.color} /></td>
                                <td><label htmlFor={`signal-${i}`}>{s.name}</label></td>
                            </tr>
                        ))}
                    </tbody>
                </LegendTable>
            </LegendBody>
        </Legend>
    );
}

function MainToolbar() {
    return (
        <TopBar>
            <TopButton aria-label="Запуск"><RuntimeIcon /></TopButton>
            <TopSeparator />
            <TopButton aria-label="Окна"><WindowFolderIcon /></TopButton>
            <TopButton aria-label="Сеть"><NetworkIcon /></TopButton>
            <TopButton aria-label="Объекты"><TanksIcon /></TopButton>
            <TopSeparator />
            <TopButton aria-label="Домой"><HomeIcon /></TopButton>
            <TopButton aria-label="Вверх"><UpLevelIcon /></TopButton>
            <TopSeparator />
            <TopButton aria-label="Назад"><ArrowIcon color="#000090" /></TopButton>
            <TopButton aria-label="История назад" $width={14}><Caret /></TopButton>
            <TopButton aria-label="Вперед"><ArrowIcon right color="#a0a0a0" /></TopButton>
            <TopButton aria-label="История вперед" $width={16}><Caret color="#a0a0a0" /></TopButton>
            <TopSeparator />
            <TopButton aria-label="Стоп"><StopIcon /></TopButton>
            <TopButton aria-label="Компьютер"><GrayPcIcon /></TopButton>
            <TopButton aria-label="Фиксация"><ForceIcon /></TopButton>
            <TopSeparator />
            <TopButton aria-label="Связи"><LinkIcon /></TopButton>
            <TopButton aria-label="Форма"><FormIcon /></TopButton>
            <TopButton aria-label="Монитор"><MonitorIcon /></TopButton>
            <TopButton aria-label="Свойства"><PropsIcon /></TopButton>
            <TopButton aria-label="Журнал"><BookIcon /></TopButton>
            <TopButton aria-label="Окно"><BlankWindowIcon /></TopButton>
            <TopSeparator $tall />
            <TopButton aria-label="Шкала" $pressed><ScaleIcon /></TopButton>
            <TopButton aria-label="Архив" $width={25}><BookIcon shade="#808080" /></TopButton>
            <TopSeparator $tall />
        </TopBar>
    );
}

function ViewRibbon() {
    return (
        <Ribbon>
            <RibbonIcon $width={36} aria-label="Снимок"><CameraIcon /></RibbonIcon>
            <RibbonIcon $width={40} aria-label="Сохранить"><FloppyIcon /></RibbonIcon>
            <RibbonIcon $width={38} aria-label="Печать"><PrinterIcon /></RibbonIcon>
            <RibbonIcon $width={34} aria-label="Обновить"><RefreshIcon /></RibbonIcon>
            <RibbonIcon $width={26} aria-label="Избранное"><StarIcon /></RibbonIcon>
            <RibbonIcon $width={34} aria-label="Справка"><HelpIcon /></RibbonIcon>
            <RibbonLine />
            <RibbonTab $active>Графики</RibbonTab>
            <RibbonTab>Значения</RibbonTab>
            <RibbonTab>Легенда</RibbonTab>
            <RibbonTab>Настройки</RibbonTab>
            <LayerBox>
                <LayerButton>Слой</LayerButton>
                <SelectWrap>
                    <LayerSelect disabled aria-label="Слой">
                        <option>Минутный</option>
                    </LayerSelect>
                    <Caret color="#b8b8c4" />
                </SelectWrap>
            </LayerBox>
        </Ribbon>
    );
}

function ChartTools() {
    return (
        <SideTools>
            <ToolColumn>
                <ToolButton aria-label="Вписать"><FitIcon /></ToolButton>
                <ToolButton aria-label="Шкалы"><RulerIcon /></ToolButton>
                <ToolButton disabled aria-label="Отменить масштаб"><TurnIcon color="#c9d5ee" /></ToolButton>
                <ToolButton disabled aria-label="Вернуть масштаб"><TurnIcon redo color="#c9d5ee" /></ToolButton>
                <ToolButton aria-label="Увеличить по Y"><ZoomIcon plus /></ToolButton>
                <ToolButton aria-label="Уменьшить по Y"><ZoomIcon /></ToolButton>
                <ToolButton $flat $height={18} aria-label="Заметка"><NoteIcon /></ToolButton>
            </ToolColumn>
            <ToolRow>
                <ToolGroup $after={18}>
                    <ToolButton $pressed aria-label="Столбцы"><ColumnsIcon /></ToolButton>
                    <ToolButton aria-label="Строки"><RowsIcon /></ToolButton>
                </ToolGroup>
                <ToolGroup>
                    <ToolButton aria-label="Отменить"><TurnIcon /></ToolButton>
                    <ToolButton disabled aria-label="Вернуть"><TurnIcon redo color="#d5deed" /></ToolButton>
                    <ToolButton aria-label="Увеличить"><ZoomIcon plus /></ToolButton>
                    <ToolButton aria-label="Уменьшить"><ZoomIcon /></ToolButton>
                </ToolGroup>
                <ToolButton $width={22} $height={21} aria-label="Лупа"><LoupeIcon /></ToolButton>
            </ToolRow>
        </SideTools>
    );
}

function DateField({ label, value, selected }) {
    return (
        <FieldBox $width={84}>
            <Field $width={57} aria-label={label} defaultValue={value} $selected={selected} />
            <DropButton aria-label="Календарь"><Caret w={9} /></DropButton>
        </FieldBox>
    );
}

function TimeField({ label, value }) {
    return (
        <FieldBox $width={89}>
            <Field $width={66} aria-label={label} defaultValue={value} />
            <SpinButtons>
                <SpinButton aria-label="Больше"><Spin /></SpinButton>
                <SpinButton aria-label="Меньше"><Spin down /></SpinButton>
            </SpinButtons>
        </FieldBox>
    );
}

function App() {
    return (
        <Page>
            <GlobalStyle />
            <MainToolbar />
            <Body>
                <Workspace>
                    <Panel>
                        <ViewRibbon />
                        <ChartRow>
                            <ChartArea>
                                <Chart />
                                <MiniLegend />
                                <ChartTools />
                            </ChartArea>
                            <VScroll>
                                <ToolButton aria-label="В начало шкалы"><DoubleArrow turn={-90} /></ToolButton>
                                <ToolButton $plain $height={17} aria-label="Выше"><Triangle turn={-90} /></ToolButton>
                                <Track $vertical>
                                    <Space $part={588} />
                                    <Thumb $vertical $part={31} />
                                </Track>
                                <ToolButton $plain $height={17} aria-label="Ниже"><Triangle turn={90} /></ToolButton>
                                <ToolButton aria-label="В конец шкалы"><DoubleArrow turn={90} /></ToolButton>
                            </VScroll>
                        </ChartRow>
                        <HScroll>
                            <ToolButton $width={18} $height={18} aria-label="В начало"><DoubleArrow turn={180} /></ToolButton>
                            <ToolButton $plain $width={17} $height={18} aria-label="Левее"><Triangle turn={180} /></ToolButton>
                            <Track>
                                <Space $part={657} />
                                <Thumb $part={146} />
                                <Space $part={360} />
                            </Track>
                            <ToolButton $plain $width={17} $height={18} aria-label="Правее"><Triangle /></ToolButton>
                            <ToolButton $width={18} $height={18} aria-label="В конец"><DoubleArrow /></ToolButton>
                        </HScroll>
                        <Footer>
                            <FooterGroup>
                                <DateField label="Дата начала" value="16.12.2018" selected />
                                <TimeField label="Время начала" value="14 : 4 : 24" />
                            </FooterGroup>
                            <FooterGroup>
                                <ToolButton $width={22} aria-label="Интервал"><RingIcon /></ToolButton>
                                <SpanLabel>1 д 1 ч</SpanLabel>
                                <ToolButton aria-label="Отменить интервал"><TurnIcon /></ToolButton>
                                <ToolButton aria-label="Вернуть интервал"><TurnIcon redo /></ToolButton>
                            </FooterGroup>
                            <FooterGroup $end>
                                <Marker>В</Marker>
                                <TimeField label="Время конца" value="15 : 28 : 22" />
                                <DateField label="Дата конца" value="17.12.2018" />
                            </FooterGroup>
                        </Footer>
                    </Panel>
                    <ExitButton>Выход</ExitButton>
                </Workspace>
                <PageScroll>
                    <PageScrollArrow aria-label="Прокрутить вверх"><Caret up /></PageScrollArrow>
                    <PageThumb><Grip /><Grip /><Grip /></PageThumb>
                    <PageScrollArrow aria-label="Прокрутить вниз"><Caret /></PageScrollArrow>
                </PageScroll>
            </Body>
        </Page>
    );
}

export default App;
